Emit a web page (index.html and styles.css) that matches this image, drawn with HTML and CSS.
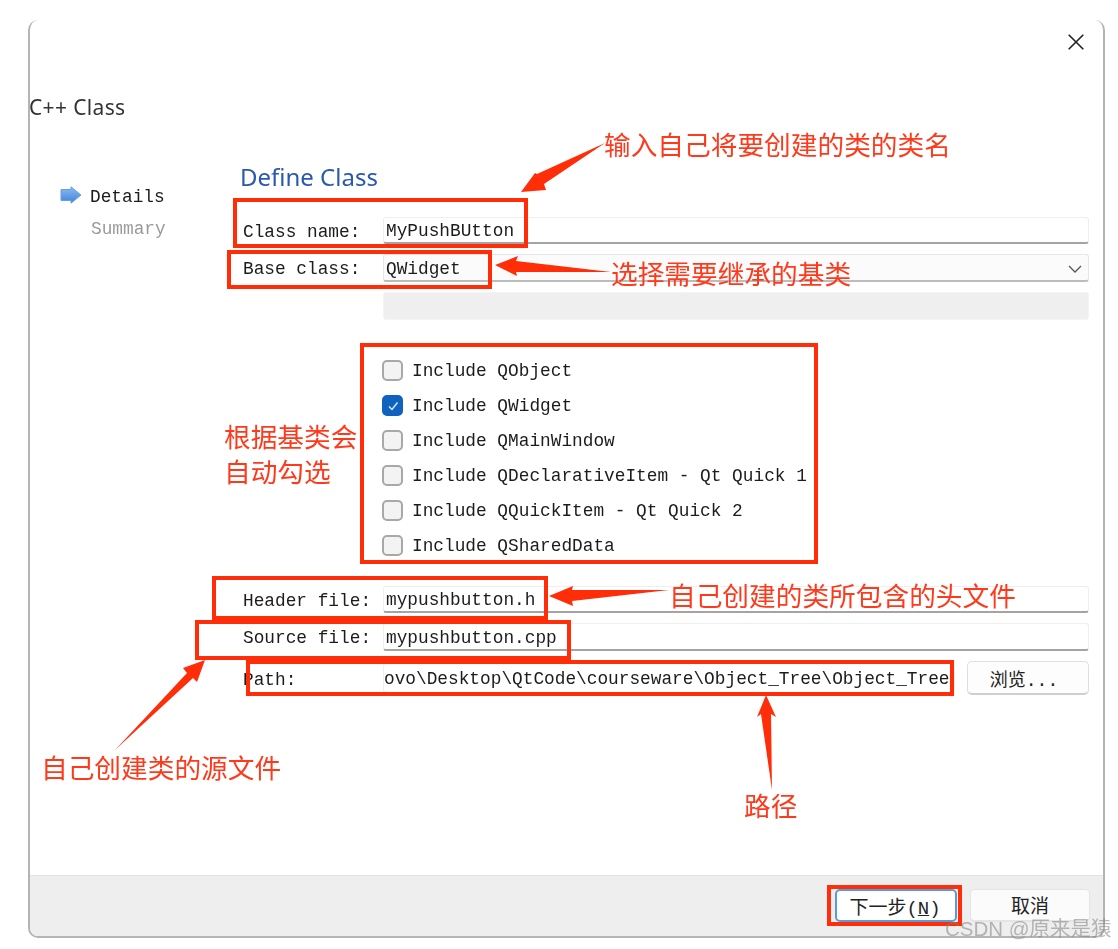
FILE: index.html
```html
<!DOCTYPE html>
<html lang="zh-CN">
<head>
<meta charset="utf-8">
<title>C++ Class</title>
<link rel="stylesheet" href="styles.css">
</head>
<body>
<div class="canvas">
  <section class="dialog">
    <div class="titlebar">
      <svg class="close" viewBox="0 0 16 16" aria-label="Close"><path d="M0.7 0.7 15.3 15.3M15.3 0.7 0.7 15.3"/></svg>
    </div>
    <h1 class="title">C++ Class</h1>
    <div class="body">
      <aside class="steps">
        <div class="step">
          <svg class="step-arrow" viewBox="0 0 22 18">
            <defs><linearGradient id="arrowFill" x1="0" y1="0" x2="0" y2="1"><stop offset="0" stop-color="#8cbcf2"/><stop offset="1" stop-color="#3f82dc"/></linearGradient></defs>
            <path d="M1 3.5H11V0.8L21 9 11 17.2V14.5H1Z" fill="url(#arrowFill)" stroke="#6a9fdf" stroke-width="1"/>
          </svg>
          <span>Details</span>
        </div>
        <div class="step step-muted"><span>Summary</span></div>
      </aside>
      <main class="form">
        <h2 class="heading">Define Class</h2>
        <div class="fields fields-top">
          <label class="label">Class name:</label>
          <div class="input">MyPushBUtton</div>
          <label class="label">Base class:</label>
          <div class="input combo">QWidget
            <svg class="chevron" viewBox="0 0 14 8"><path d="M1 1 7 7 13 1"/></svg>
          </div>
          <span></span>
          <div class="input disabled"></div>
        </div>
        <div class="checks">
          <div class="check"><span class="box"></span>Include QObject</div>
          <div class="check"><span class="box box-on"><svg viewBox="0 0 12 12"><path d="M2 6.5 5 9.5 10.5 2.5"/></svg></span>Include QWidget</div>
          <div class="check"><span class="box"></span>Include QMainWindow</div>
          <div class="check"><span class="box"></span>Include QDeclarativeItem - Qt Quick 1</div>
          <div class="check"><span class="box"></span>Include QQuickItem - Qt Quick 2</div>
          <div class="check"><span class="box"></span>Include QSharedData</div>
        </div>
        <div class="fields fields-bottom">
          <label class="label">Header file:</label>
          <div class="input">mypushbutton.h</div>
          <label class="label">Source file:</label>
          <div class="input">mypushbutton.cpp</div>
          <label class="label label-path">Path:</label>
          <div class="path-row">
            <div class="input path">ovo\Desktop\QtCode\courseware\Object_Tree\Object_Tree</div>
            <button class="btn btn-browse">浏览...</button>
          </div>
        </div>
      </main>
    </div>
    <footer class="footer">
      <button class="btn btn-next">下一步(<u>N</u>)</button>
      <button class="btn btn-cancel">取消</button>
    </footer>
  </section>

  <div class="marks">
    <svg class="arrows" viewBox="0 0 1118 949">
      <polygon points="605,143 537,174 535,173 521,192 546,190 544,184"/>
      <polygon points="611,272 516,261 518,256 495,265 517,276 516,272"/>
      <polygon points="669,590 572,590 573,586 549,596 573,606 572,601"/>
      <polygon points="115,750 193,678 197,682 205,660 183,668 187,673"/>
      <polygon points="772,790 771,714 776,717 766,695 757,717 761,714"/>
    </svg>
    <div class="rect rect-class"></div>
    <div class="rect rect-base"></div>
    <div class="rect rect-checks"></div>
    <div class="rect rect-header"></div>
    <div class="rect rect-source"></div>
    <div class="rect rect-path"></div>
    <div class="rect rect-next"></div>
    <div class="note note-class">输入自己将要创建的类的类名</div>
    <div class="note note-base">选择需要继承的基类</div>
    <div class="note note-checks">根据基类会<br>自动勾选</div>
    <div class="note note-header">自己创建的类所包含的头文件</div>
    <div class="note note-source">自己创建类的源文件</div>
    <div class="note note-path">路径</div>
    <div class="watermark">CSDN @原来是猿</div>
  </div>
</div>
</body>
</html>
```

FILE: styles.css
```css
* { box-sizing: border-box; }
html, body { margin: 0; padding: 0; background: #fff; }
body { overflow: hidden; }

.canvas {
  position: relative;
  width: 1118px;
  height: 949px;
  padding: 20px 0 0 28px;
  overflow: hidden;
  filter: blur(0.5px);
  font-family: "Liberation Mono", "Noto Sans CJK SC", monospace;
  font-size: 17.8px;
  color: #1c1c1c;
}

.dialog {
  display: flex;
  flex-direction: column;
  width: 1077px;
  height: 918px;
  background: #fff;
  border: 2px solid #b4b4b4;
  border-top: 0;
  border-radius: 10px;
}

.titlebar {
  display: flex;
  justify-content: flex-end;
  padding: 14px 19px 0 0;
}
.close { width: 16px; height: 16px; display: block; }
.close path { fill: none; stroke: #222; stroke-width: 1.6; }

.title {
  margin: 43px 0 0 -1px;
  font: 400 21px/28px "Noto Sans", sans-serif;
  letter-spacing: 0.35px;
  color: #333;
}

.body {
  display: flex;
  padding: 0 14px 0 30px;
  margin-top: 40px;
}

.steps {
  width: 180px;
  padding-top: 21px;
  display: flex;
  flex-direction: column;
  gap: 2px;
}
.step { display: flex; align-items: center; height: 30px; padding-left: 30px; position: relative; }
.step-muted { color: #9a9a9a; padding-left: 31px; }
.step-arrow { position: absolute; left: 0; top: 4px; width: 22px; height: 18px; }

.form { flex: 1; min-width: 0; }
.heading {
  margin: 0;
  font: 400 24px/32px "Noto Sans", sans-serif;
  color: #2a59ad;
}

.fields {
  display: grid;
  grid-template-columns: 143px 1fr;
  align-items: center;
}
.fields-top { margin-top: 24px; grid-template-rows: 27px 28px 28px; row-gap: 10px; }
.fields-bottom { margin-top: 23px; grid-template-rows: 27px 28px 34px; row-gap: 10px; }
.label { padding: 2px 0 0 3px; white-space: pre; }
.label-path { padding-top: 4px; }

.input {
  display: flex;
  align-items: center;
  height: 100%;
  padding: 2px 0 0 2px;
  background: #fff;
  border: 1px solid #efefef;
  border-bottom: 2px solid #a4a4a4;
  border-radius: 3px;
  white-space: nowrap;
  overflow: hidden;
}
.combo {
  justify-content: space-between;
  background: #fbfbfb;
  border-color: #e6e6e6;
  border-bottom-color: #bcbcbc;
  padding-right: 6px;
}
.chevron { width: 14px; height: 8px; }
.chevron path { fill: none; stroke: #555; stroke-width: 1.3; }
.disabled { background: #efefef; border: 1px solid #f4f4f4; }

.checks { margin-top: 33px; margin-left: 142px; }
.check { display: flex; align-items: center; height: 35px; gap: 9px; }
.box {
  display: flex;
  align-items: center;
  justify-content: center;
  width: 21px;
  height: 21px;
  background: #f3f3f3;
  border: 2px solid #a8a8a8;
  border-radius: 5px;
}
.box-on { background: #0f62bd; border-color: #0f62bd; }
.box svg { width: 12px; height: 12px; }
.box svg path { fill: none; stroke: #dfeaf6; stroke-width: 1.4; }

.path-row { display: flex; align-items: center; gap: 12px; height: 100%; }
.path {
  flex: 1;
  min-width: 0;
  height: 30px;
  border-bottom: 1px solid #efefef;
  padding-left: 0;
}

.btn {
  font-family: "Liberation Mono", "Noto Sans CJK SC", monospace;
  font-size: 19px;
  color: #222;
  background: #fdfdfd;
  border: 1px solid #dedede;
  border-bottom: 2px solid #cfcfcf;
  border-radius: 5px;
  padding: 0;
}
.btn-browse { width: 122px; height: 34px; flex: none; font-size: 18px; padding-right: 8px; }

.footer {
  margin-top: auto;
  display: flex;
  justify-content: flex-end;
  gap: 13px;
  height: 61px;
  padding: 13px 13px 0 0;
  background: #eee;
  border-top: 1px solid #e2e2e2;
  border-radius: 0 0 8px 8px;
}
.btn-next { width: 122px; height: 33px; background: #fff; border: 2px solid #5a9bdc; padding-right: 2px; }
.btn-cancel { width: 120px; height: 33px; background: #fbfbfb; border-color: #e4e4e4; }

.marks { position: absolute; left: 0; top: 0; width: 1118px; height: 949px; }
.arrows { position: absolute; left: 0; top: 0; width: 1118px; height: 949px; }
.arrows polygon { fill: #ff2d08; }

.rect { position: absolute; border: 4px solid #ff2d08; }
.rect-class { left: 233px; top: 198px; width: 295px; height: 50px; }
.rect-base { left: 227px; top: 250px; width: 265px; height: 39px; }
.rect-checks { left: 360px; top: 343px; width: 458px; height: 221px; }
.rect-header { left: 212px; top: 576px; width: 336px; height: 44px; }
.rect-source { left: 195px; top: 620px; width: 376px; height: 40px; }
.rect-path { left: 246px; top: 660px; width: 708px; height: 36px; }
.rect-next { left: 827px; top: 885px; width: 135px; height: 41px; }

.note {
  position: absolute;
  font-family: "Noto Sans CJK SC", sans-serif;
  font-size: 26.7px;
  line-height: 35px;
  color: #ff3a1c;
  white-space: nowrap;
}
.note-class { left: 604px; top: 126px; }
.note-base { left: 611px; top: 255px; }
.note-checks { left: 224px; top: 418px; }
.note-header { left: 669px; top: 577px; }
.note-source { left: 41px; top: 749px; }
.note-path { left: 744px; top: 787px; }

.watermark {
  position: absolute;
  left: 945px;
  top: 915px;
  font-family: "Liberation Sans", "Noto Sans CJK SC", sans-serif;
  font-size: 20.5px;
  line-height: 28px;
  color: rgba(130, 130, 130, 0.55);
  white-space: nowrap;
}
```
